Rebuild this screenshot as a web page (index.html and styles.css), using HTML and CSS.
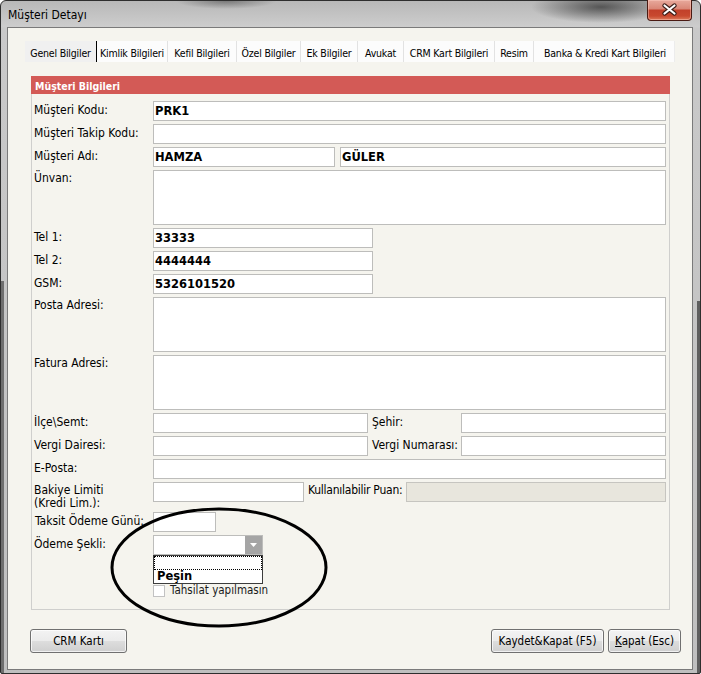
FILE: index.html
```html
<!DOCTYPE html>
<html lang="tr">
<head>
<meta charset="utf-8">
<title>Müşteri Detayı</title>
<link rel="stylesheet" href="styles.css">
</head>
<body>
<div class="window">
  <div class="titlebar">
    <span class="title">Müşteri Detayı</span>
    <div class="close">
      <svg width="45" height="21" viewBox="0 0 45 21">
        <path d="M17.5 6.5 L27.5 14.5 M27.5 6.5 L17.5 14.5" stroke="#3b1c16" stroke-width="4.4" stroke-linecap="round" fill="none"/>
        <path d="M17.5 6.5 L27.5 14.5 M27.5 6.5 L17.5 14.5" stroke="#ffffff" stroke-width="2.2" stroke-linecap="round" fill="none"/>
      </svg>
    </div>
  </div>
  <div class="client">
    <div class="tabs">
      <div class="tab active">Genel Bilgiler</div>
      <div class="tab">Kimlik Bilgileri</div>
      <div class="tab">Kefil Bilgileri</div>
      <div class="tab">Özel Bilgiler</div>
      <div class="tab">Ek Bilgiler</div>
      <div class="tab">Avukat</div>
      <div class="tab">CRM Kart Bilgileri</div>
      <div class="tab">Resim</div>
      <div class="tab">Banka &amp; Kredi Kart Bilgileri</div>
    </div>
    <div class="panel">
      <div class="panel-head">Müşteri Bilgileri</div>
      <div class="rows">
        <div class="row"><span class="lbl">Müşteri Kodu:</span><div class="field grow">PRK1</div></div>
        <div class="row"><span class="lbl">Müşteri Takip Kodu:</span><div class="field grow"></div></div>
        <div class="row"><span class="lbl">Müşteri Adı:</span><div class="field w-ad">HAMZA</div><div class="field grow gap5">GÜLER</div></div>
        <div class="row tall"><span class="lbl">Ünvan:</span><div class="field area grow"></div></div>
        <div class="row"><span class="lbl">Tel 1:</span><div class="field w-tel">33333</div></div>
        <div class="row"><span class="lbl">Tel 2:</span><div class="field w-tel">4444444</div></div>
        <div class="row"><span class="lbl">GSM:</span><div class="field w-tel">5326101520</div></div>
        <div class="row tall"><span class="lbl">Posta Adresi:</span><div class="field area grow"></div></div>
        <div class="row tall"><span class="lbl">Fatura Adresi:</span><div class="field area grow"></div></div>
        <div class="row"><span class="lbl">İlçe\Semt:</span><div class="field w-ilce"></div><span class="lbl2 w-sehir">Şehir:</span><div class="field grow"></div></div>
        <div class="row"><span class="lbl">Vergi Dairesi:</span><div class="field w-ilce"></div><span class="lbl2 w-sehir">Vergi Numarası:</span><div class="field grow"></div></div>
        <div class="row"><span class="lbl">E-Posta:</span><div class="field grow"></div></div>
        <div class="row bakiye"><span class="lbl">Bakiye Limiti<br>(Kredi Lim.):</span><div class="field w-bakiye"></div><span class="lbl2 w-puan">Kullanılabilir Puan:</span><div class="field grow disabled"></div></div>
        <div class="row"><span class="lbl shift">Taksit Ödeme Günü:</span><div class="field w-taksit"></div></div>
        <div class="row"><span class="lbl">Ödeme Şekli:</span>
          <div class="combo">
            <div class="combo-btn"><svg width="7" height="4" viewBox="0 0 7 4"><path d="M0 0 H7 L3.5 4 Z" fill="#ffffff"/></svg></div>
            <div class="droplist">
              <div class="item focus"></div>
              <div class="item">Peşin</div>
            </div>
          </div>
        </div>
        <div class="row check"><span class="box"></span><span class="check-text">Tahsilat yapılmasın</span></div>
      </div>
    </div>
    <div class="buttons">
      <div class="btn w-crm">CRM Kartı</div>
      <div class="btn w-kaydet push">Kaydet&amp;Kapat (F5)</div>
      <div class="btn w-kapat"><span class="u">K</span>apat (Esc)</div>
    </div>
  </div>
  <svg class="annot" width="701" height="674" viewBox="0 0 701 674">
    <ellipse cx="219" cy="567.5" rx="107" ry="58.5" fill="none" stroke="#000" stroke-width="3"/>
  </svg>
</div>
</body>
</html>
```
FILE: styles.css
```css
* { box-sizing: border-box; }
html, body { margin: 0; padding: 0; }
body {
  width: 701px;
  height: 674px;
  overflow: hidden;
  background: #ffffff;
  font-family: "DejaVu Sans Condensed", "DejaVu Sans", sans-serif;
  font-size: 12px;
  color: #000;
}

.window {
  position: relative;
  width: 701px;
  height: 674px;
  border: 1px solid #2e2e2e;
  border-radius: 6px 6px 2px 2px;
  padding: 0 7px 3px 6px;
  display: flex;
  flex-direction: column;
  background:
    radial-gradient(ellipse 70px 16px at 600px 6px, rgba(50,50,50,0.75), rgba(50,50,50,0)),
    radial-gradient(ellipse 50px 8px at 225px 0px, rgba(70,70,70,0.55), rgba(70,70,70,0)),
    linear-gradient(to right, #6e6e6e 0, #6e6e6e 3px, rgba(0,0,0,0) 3px) 0 280px / 6px 100% no-repeat,
    linear-gradient(to right, rgba(0,0,0,0) 0, rgba(0,0,0,0) 3px, #5e5e5e 3px) 693px 300px / 7px 100% no-repeat,
    linear-gradient(to bottom, #b8b8b8 0, #cdcdcd 26px, #c9c9c9 27px, #bfbfbf 100%);
}

.titlebar {
  height: 26px;
  display: flex;
  justify-content: space-between;
  align-items: flex-start;
}
.title {
  font-size: 12px;
  line-height: 14px;
  padding: 7px 0 0 1px;
  color: #000;
}
.close {
  width: 45px;
  height: 21px;
  margin: -1px 1px 0 0;
  border: 1px solid #4a1a12;
  border-top: none;
  border-radius: 0 0 4px 4px;
  background: linear-gradient(to bottom, #e8a99c 0%, #d98676 45%, #c2402a 50%, #c8492f 80%, #dd7a5a 100%);
  box-shadow: inset 0 0 0 1px rgba(255,210,200,0.45);
}
.close svg { display: block; margin-top: -1px; margin-left: -1px; }

.client {
  flex: 1;
  border: 1px solid #7a7a7a;
  background: #f5f4ee;
  padding: 13px 11px 0 17px;
  display: flex;
  flex-direction: column;
}

/* tabs */
.tabs {
  display: flex;
  height: 21px;
  margin-right: 6px;
  background: #fcfcfc;
}
.tab {
  flex: none;
  height: 21px;
  border-right: 1px solid #e2e2e2;
  text-align: center;
  font-size: 10.5px;
  letter-spacing: -0.2px;
  line-height: 17px;
  padding-top: 4px;
  white-space: nowrap;
  color: #000;
}
.tab.active { background: #f0f0f0; border-right: 1px solid #000; }
.tab:nth-child(1) { width: 72px; }
.tab:nth-child(2) { width: 71px; }
.tab:nth-child(3) { width: 69px; }
.tab:nth-child(4) { width: 64px; }
.tab:nth-child(5) { width: 57px; }
.tab:nth-child(6) { width: 46px; }
.tab:nth-child(7) { width: 91px; }
.tab:nth-child(8) { width: 39px; }
.tab:nth-child(9) { width: 141px; padding-left: 2px; border-right-color: #ececec; }

/* panel */
.panel {
  margin: 14px 11px 0 6px;
}
.panel-head {
  height: 18px;
  background: #d35a56;
  color: #fff;
  font-weight: bold;
  font-size: 10.5px;
  line-height: 16px;
  padding: 2px 0 0 4px;
}
.rows {
  border: 1px solid #cfcfcd;
  border-top: none;
  padding: 7px 3px 11px 2px;
  display: flex;
  flex-direction: column;
  gap: 3px;
}
.row {
  display: flex;
  align-items: flex-start;
  height: 20px;
}
.row.tall { height: 55px; }
.row.bakiye { height: 27px; }
.lbl {
  flex: none;
  width: 119px;
  line-height: 13px;
  padding-top: 3px;
  white-space: nowrap;
}
.row.tall .lbl,
.row.bakiye .lbl { padding-top: 2px; }
.lbl.shift { padding-left: 1px; }
.lbl2 {
  flex: none;
  line-height: 13px;
  padding-top: 3px;
  margin-left: 4px;
  white-space: nowrap;
}
.w-sehir { width: 89px; }
.w-puan { width: 98px; letter-spacing: -0.25px; padding-top: 2px; }

.field {
  flex: none;
  height: 20px;
  border: 1px solid #bdbdbb;
  background: #fff;
  padding: 0 1px;
  font-family: "DejaVu Sans", sans-serif;
  font-weight: bold;
  font-size: 11.5px;
  line-height: 18px;
  white-space: nowrap;
  overflow: hidden;
}
.field.area { height: 55px; }
.field.disabled { background: #e8e6dd; border-color: #c6c5c0; }
.grow { flex: 1; }
.gap5 { margin-left: 5px; }
.w-ad { width: 182px; }
.w-tel { width: 220px; }
.w-ilce { width: 215px; }
.w-bakiye { width: 151px; }
.w-taksit { width: 63px; }

/* combo */
.combo {
  position: relative;
  flex: none;
  width: 110px;
  height: 20px;
  border: 1px solid #bdbdbb;
  background: #fff;
  display: flex;
  justify-content: flex-end;
}
.combo-btn {
  width: 17px;
  height: 18px;
  background: #a5a5a5;
  display: flex;
  align-items: center;
  justify-content: center;
}
.combo-btn svg { display: block; }
.droplist {
  position: absolute;
  left: -1px;
  top: 19px;
  width: 110px;
  height: 29px;
  border: 1px solid #3c3c3c;
  background: #fff;
  padding: 0;
}
.droplist .item {
  height: 13px;
  font-family: "DejaVu Sans", sans-serif;
  font-weight: bold;
  font-size: 11.5px;
  line-height: 13px;
  padding-left: 3px;
}
.droplist .item.focus {
  height: 14px;
  border: 1px dotted #000;
}

/* checkbox row */
.row.check {
  height: 13px;
  margin-top: 27px;
  padding-left: 119px;
  align-items: flex-start;
}
.box {
  flex: none;
  width: 12px;
  height: 12px;
  border: 1px solid #c2c2c2;
  background: #fff;
}
.check-text {
  margin-left: 5px;
  font-size: 11.5px;
  line-height: 13px;
  margin-top: -1px;
  color: #1a1a1a;
  white-space: nowrap;
}

/* buttons */
.buttons {
  display: flex;
  margin: 19px 0 0 5px;
  gap: 4px;
}
.btn {
  height: 24px;
  border: 1px solid #707070;
  border-radius: 3px;
  background: linear-gradient(to bottom, #f3f3f3 0%, #ebebeb 48%, #dddddd 52%, #cfcfcf 100%);
  box-shadow: inset 0 0 0 1px rgba(255,255,255,0.7);
  text-align: center;
  line-height: 22px;
  font-size: 11.5px;
  white-space: nowrap;
}
.w-crm { width: 97px; }
.w-kaydet { width: 113px; }
.w-kapat { width: 73px; }
.push { margin-left: auto; }
.u { text-decoration: underline; }

.annot {
  position: absolute;
  left: -1px;
  top: -1px;
  pointer-events: none;
}
```
